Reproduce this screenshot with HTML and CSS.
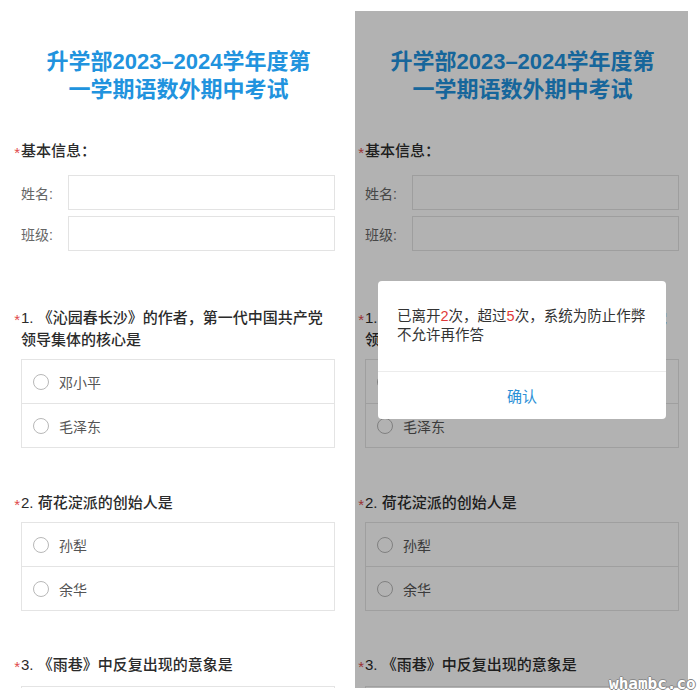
FILE: index.html
```html
<!DOCTYPE html>
<html lang="zh-CN">
<head>
<meta charset="utf-8">
<link rel="stylesheet" href="styles.css">
</head>
<body>
<div class="page">
  <div class="panel">
    <div class="form">
      <h1 class="title">升学部2023–2024学年度第<br>一学期语数外期中考试</h1>
      <div class="section">
        <div class="q-title"><span class="star">*</span><span class="q-text">基本信息：</span></div>
        <div class="fields">
          <div class="field"><span class="label">姓名:</span><span class="input"></span></div>
          <div class="field"><span class="label">班级:</span><span class="input"></span></div>
        </div>
      </div>
      <div class="question first">
        <div class="q-title"><span class="star">*</span><span class="q-text">1. 《沁园春长沙》的作者，第一代中国共产党领导集体的核心是</span></div>
        <div class="options">
          <div class="option"><span class="radio"></span><span>邓小平</span></div>
          <div class="option"><span class="radio"></span><span>毛泽东</span></div>
        </div>
      </div>
      <div class="question">
        <div class="q-title"><span class="star">*</span><span class="q-text">2. 荷花淀派的创始人是</span></div>
        <div class="options">
          <div class="option"><span class="radio"></span><span>孙犁</span></div>
          <div class="option"><span class="radio"></span><span>余华</span></div>
        </div>
      </div>
      <div class="question last">
        <div class="q-title"><span class="star">*</span><span class="q-text">3. 《雨巷》中反复出现的意象是</span></div>
        <div class="options empty"></div>
      </div>
    </div>
  </div>

  <div class="panel">
    <div class="form">
      <h1 class="title">升学部2023–2024学年度第<br>一学期语数外期中考试</h1>
      <div class="section">
        <div class="q-title"><span class="star">*</span><span class="q-text">基本信息：</span></div>
        <div class="fields">
          <div class="field"><span class="label">姓名:</span><span class="input"></span></div>
          <div class="field"><span class="label">班级:</span><span class="input"></span></div>
        </div>
      </div>
      <div class="question first">
        <div class="q-title"><span class="star">*</span><span class="q-text">1. 《沁园春长沙》的作者，第一代中国共产党领导集体的核心是</span></div>
        <div class="options">
          <div class="option"><span class="radio"></span><span>邓小平</span></div>
          <div class="option"><span class="radio"></span><span>毛泽东</span></div>
        </div>
      </div>
      <div class="question">
        <div class="q-title"><span class="star">*</span><span class="q-text">2. 荷花淀派的创始人是</span></div>
        <div class="options">
          <div class="option"><span class="radio"></span><span>孙犁</span></div>
          <div class="option"><span class="radio"></span><span>余华</span></div>
        </div>
      </div>
      <div class="question last">
        <div class="q-title"><span class="star">*</span><span class="q-text">3. 《雨巷》中反复出现的意象是</span></div>
        <div class="options empty"></div>
      </div>
    </div>
    <div class="mask">
      <div class="dialog">
        <div class="dialog-body">已离开<em>2</em>次，超过<em>5</em>次，系统为防止作弊不允许再作答</div>
        <div class="dialog-btn">确认</div>
      </div>
    </div>
  </div>
</div>
<span class="watermark">whambc.co</span>
</body>
</html>
```

FILE: styles.css
```css
* { box-sizing: border-box; }
html, body {
  margin: 0;
  padding: 0;
  background: #fff;
}
body {
  width: 700px;
  height: 700px;
  overflow: hidden;
  position: relative;
  font-family: "Liberation Sans", "Noto Sans CJK SC", sans-serif;
  color: #333;
}
.page {
  display: flex;
  gap: 11px;
  padding: 11px;
}
.panel {
  position: relative;
  width: 333px;
  height: 677px;
  overflow: hidden;
  background: #fff;
}
.form {
  padding-top: 37px;
}
.title {
  margin: 0;
  text-align: center;
  font-size: 22px;
  line-height: 28px;
  font-weight: 700;
  color: #2193de;
  padding-left: 2px;
}
.section,
.question {
  padding-right: 9px;
}
.section {
  margin-top: 36px;
}
.q-title {
  display: flex;
  font-size: 15px;
  line-height: 22px;
  font-weight: 500;
  color: #2b2b2b;
}
.star {
  width: 10px;
  height: 22px;
  flex: none;
  color: #e0484a;
  font-size: 15px;
  font-weight: 400;
  line-height: 20px;
  padding-top: 3px;
  text-align: right;
  padding-right: 1px;
  overflow: hidden;
}
.q-text {
  flex: 1;
}
.fields {
  margin-top: 13px;
  padding-left: 10px;
  display: flex;
  flex-direction: column;
  gap: 6px;
}
.field {
  display: flex;
  align-items: center;
}
.label {
  width: 47px;
  flex: none;
  font-size: 14px;
  color: #666;
}
.input {
  flex: 1;
  height: 35px;
  border: 1px solid #e3e3e3;
  background: #fff;
}
.question {
  margin-top: 44px;
}
.question.first {
  margin-top: 56px;
}
.question.last {
  margin-top: 43px;
}
.options {
  margin: 8px 0 0 10px;
  border: 1px solid #e4e4e4;
}
.options.empty {
  margin-top: 10px;
  height: 60px;
}
.option {
  height: 43px;
  display: flex;
  align-items: center;
  padding-left: 11px;
  font-size: 14px;
  color: #555;
}
.option + .option {
  border-top: 1px solid #e4e4e4;
  height: 44px;
}
.radio {
  width: 16px;
  height: 16px;
  border: 1px solid #b8b8b8;
  border-radius: 50%;
  margin-right: 10px;
  flex: none;
  background: #fff;
}
.mask {
  position: absolute;
  inset: 0;
  background: rgba(0, 0, 0, 0.3);
  display: flex;
  align-items: center;
  justify-content: center;
}
.dialog {
  width: 288px;
  background: #fff;
  border-radius: 4px;
  overflow: hidden;
  margin-left: 1px;
}
.dialog-body {
  padding: 26px 19px 26px 19px;
  font-size: 14.5px;
  line-height: 19px;
  color: #333;
}
.dialog-body em {
  font-style: normal;
  color: #e03a3a;
}
.dialog-btn {
  height: 48px;
  border-top: 1px solid #ececec;
  display: flex;
  align-items: center;
  justify-content: center;
  font-size: 15px;
  color: #2b8fd6;
}
.watermark {
  position: absolute;
  left: 609px;
  top: 674px;
  font-family: "DejaVu Sans Mono", monospace;
  font-size: 16px;
  font-weight: 700;
  color: #fff;
  text-shadow: 1px 0 #888, -1px 0 #888, 0 1px #888, 0 -1px #888;
}
```
